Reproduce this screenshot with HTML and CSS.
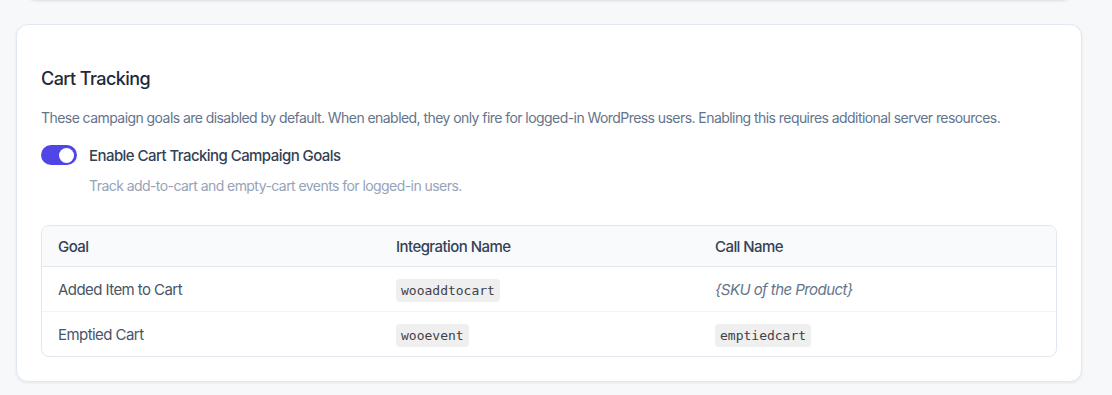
FILE: index.html
```html
<!DOCTYPE html>
<html lang="en">
<head>
    <meta charset="UTF-8">
    <title>Cart Tracking</title>
    <link rel="stylesheet" href="styles.css">
</head>
<body>
    <div class="prev-card"></div>
    <div class="card">
        <h2>Cart Tracking</h2>
        <p class="desc">These campaign goals are disabled by default. When enabled, they only fire for logged-in WordPress users. Enabling this requires additional server resources.</p>
        <label class="toggle-row">
            <span class="toggle"><span class="knob"></span></span>
            <span class="toggle-label">Enable Cart Tracking Campaign Goals</span>
        </label>
        <p class="hint">Track add-to-cart and empty-cart events for logged-in users.</p>
        <div class="table-wrap">
            <table>
                <thead>
                    <tr>
                        <th class="col-goal">Goal</th>
                        <th class="col-int">Integration Name</th>
                        <th>Call Name</th>
                    </tr>
                </thead>
                <tbody>
                    <tr>
                        <td>Added Item to Cart</td>
                        <td><code>wooaddtocart</code></td>
                        <td><em>{SKU of the Product}</em></td>
                    </tr>
                    <tr>
                        <td>Emptied Cart</td>
                        <td><code>wooevent</code></td>
                        <td><code>emptiedcart</code></td>
                    </tr>
                </tbody>
            </table>
        </div>
    </div>
</body>
</html>
```

FILE: styles.css
```css
body {
    margin: 0;
    background: #f7f8fa;
    font-family: 'Inter', 'Liberation Sans', sans-serif;
    letter-spacing: -0.035em;
    color: #1e293b;
}
.prev-card {
    height: 20px;
    margin: -20px 39px 0 25px;
    background: #fff;
    border-radius: 0 0 12px 12px;
    box-shadow: 0 1px 3px rgba(15, 23, 42, 0.12);
}
.card {
    margin: 24px 30px 14px 16px;
    background: #fff;
    border: 1px solid #e2e8f0;
    border-radius: 12px;
    box-shadow: 0 1px 3px rgba(15, 23, 42, 0.08);
    padding: 40px 24px 24px 24px;
}
h2 {
    margin: 0;
    font-size: 18px;
    font-weight: 500;
    color: #1e293b;
    line-height: 28px;
}
.desc {
    margin: 15px 0 0;
    font-size: 14px;
    line-height: 20px;
    color: #64748b;
}
.toggle-row {
    display: flex;
    align-items: center;
    gap: 12px;
    margin-top: 17px;
}
.toggle {
    width: 36px;
    height: 20px;
    border-radius: 10px;
    background: #4f46e5;
    display: flex;
    align-items: center;
    justify-content: flex-end;
    padding: 0 3px;
    box-sizing: border-box;
}
.knob {
    width: 15px;
    height: 15px;
    border-radius: 50%;
    background: #fff;
}
.toggle-label {
    font-size: 15px;
    font-weight: 500;
    color: #334155;
}
.hint {
    margin: 11px 0 0 48px;
    font-size: 14px;
    line-height: 20px;
    color: #94a3b8;
}
.table-wrap {
    margin-top: 29px;
    border: 1px solid #e2e8f0;
    border-radius: 8px;
    overflow: hidden;
}
table {
    width: 100%;
    border-collapse: collapse;
    font-size: 15px;
}
th {
    text-align: left;
    font-weight: 500;
    color: #334155;
    background: #f8fafc;
    padding: 0 16px;
    height: 40px;
    border-bottom: 1px solid #e2e8f0;
}
.col-goal {
    width: 306px;
}
.col-int {
    width: 287px;
}
td {
    padding: 0 16px;
    height: 44px;
    color: #475569;
}
tbody tr + tr td {
    border-top: 1px solid #f1f5f9;
}
code {
    font-family: 'DejaVu Sans Mono', monospace;
    font-size: 13px;
    letter-spacing: 0;
    background: #efefef;
    color: #3f3f46;
    padding: 4px 5px;
    border-radius: 4px;
}
em {
    color: #64748b;
}
```
